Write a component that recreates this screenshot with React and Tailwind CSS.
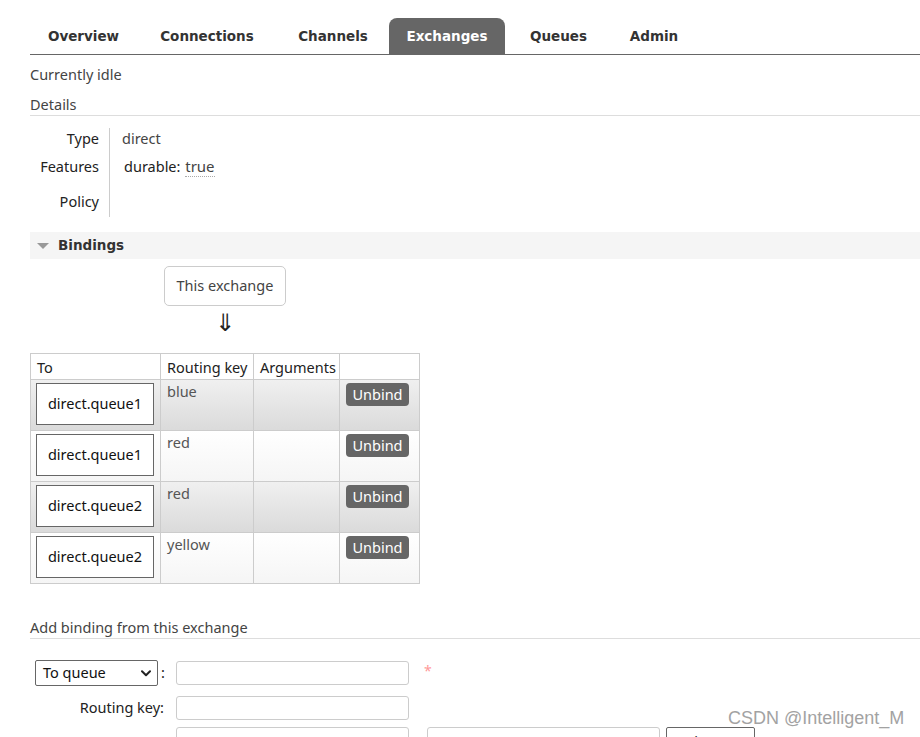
import React from "react";

const body = { fontFamily: '"Noto Sans", "Open Sans", sans-serif' };
const bold = { fontFamily: '"DejaVu Sans", Verdana, sans-serif' };

const tabs = [
  { name: "Overview", w: "w-[107px]" },
  { name: "Connections", w: "w-[140px]" },
  { name: "Channels", w: "w-[112px]" },
  { name: "Exchanges", w: "w-[116px]", active: true },
  { name: "Queues", w: "w-[107px]" },
  { name: "Admin", w: "w-[84px]" },
];

const rows = [
  { q: "direct.queue1", key: "blue", odd: true },
  { q: "direct.queue1", key: "red", odd: false },
  { q: "direct.queue2", key: "red", odd: true },
  { q: "direct.queue2", key: "yellow", odd: false },
];

function Chevron() {
  return (
    <svg width="10" height="7" viewBox="0 0 10 7" fill="none">
      <path d="M1 1.2 L5 5.2 L9 1.2" stroke="#222" strokeWidth="2" strokeLinecap="round" strokeLinejoin="round" />
    </svg>
  );
}

export default function App() {
  return (
    <div className="relative w-[920px] h-[737px] overflow-hidden bg-white text-[#444] text-[14.5px]" style={body}>
      <div className="pl-[30px] pt-[18px]">
        {/* Tabs */}
        <div className="flex border-b border-[#666]">
          {tabs.map((t) => (
            <div
              key={t.name}
              className={`${t.w} h-[36px] flex items-center justify-center font-bold text-[13.5px] ${
                t.active ? "bg-[#666] text-white rounded-t-[8px]" : "text-[#333]"
              }`}
              style={bold}
            >
              {t.name}
            </div>
          ))}
        </div>

        <div className="mt-[9px] leading-[20px]">Currently idle</div>
        <div className="mt-[10px] leading-[20px] pb-[1px] border-b border-[#ddd]">Details</div>

        {/* Details */}
        <div className="mt-[12px] grid grid-cols-[80px_auto] leading-[20px]">
          <div className="h-[28px] pr-[10px] text-right text-[#222] border-r border-[#ccc]">Type</div>
          <div className="h-[28px] pl-[12px]">direct</div>
          <div className="h-[35px] pr-[10px] text-right text-[#222] border-r border-[#ccc]">Features</div>
          <div className="h-[35px] pl-[14px] text-[#222]">
            durable:{" "}
            <span className="ml-[1px] text-[#444] border-b border-dotted border-[#aaa] text-[15px]">true</span>
          </div>
          <div className="h-[26px] pr-[10px] text-right text-[#222] border-r border-[#ccc]">Policy</div>
          <div className="h-[26px]"></div>
        </div>

        {/* Bindings header */}
        <div className="mt-[15px] h-[27px] bg-[#f5f5f5] flex items-center pl-[7px]">
          <svg width="12" height="8" viewBox="0 0 12 8">
            <path d="M0 1 L12 1 L6 7 Z" fill="#999" />
          </svg>
          <span className="ml-[9px] font-bold text-[13.5px] text-[#333]" style={bold}>
            Bindings
          </span>
        </div>

        <div className="ml-[134px] mt-[7px] w-[122px]">
          <div className="h-[40px] border border-[#ccc] rounded-[5px] flex items-center justify-center text-[#444]">
            This exchange
          </div>
          <div className="mt-[5px] text-center text-[24px] leading-[24px] text-[#222]" style={bold}>
            ⇓
          </div>
        </div>

        {/* Bindings table */}
        <table className="mt-[18px] border-collapse border border-[#ccc] text-[14.5px]">
          <thead>
            <tr className="h-[26px] text-[#222]">
              <th className="w-[130px] border border-[#ccc] text-left font-normal pl-[6px] py-0 leading-[20px]">To</th>
              <th className="w-[93px] border border-[#ccc] text-left font-normal pl-[6px] py-0 leading-[20px]">Routing key</th>
              <th className="w-[86px] border border-[#ccc] text-left font-normal pl-[6px] py-0 leading-[20px]">Arguments</th>
              <th className="w-[80px] border border-[#ccc] py-0"></th>
            </tr>
          </thead>
          <tbody>
            {rows.map((r, i) => (
              <tr
                key={i}
                className={`h-[51px] ${
                  r.odd ? "bg-linear-to-b from-[#f0f0f0] to-[#dadada]" : "bg-linear-to-b from-[#ffffff] to-[#f5f5f5]"
                }`}
              >
                <td className="border border-[#ccc] align-top pt-[3px] pl-[5px] pb-[4px]">
                  <div className="w-[118px] h-[42px] border border-[#666] bg-white flex items-center justify-center text-[#111]">
                    {r.q}
                  </div>
                </td>
                <td className="border border-[#ccc] align-top pl-[6px] pt-[1px] leading-[20px] text-[#555]">{r.key}</td>
                <td className="border border-[#ccc]"></td>
                <td className="border border-[#ccc] align-top pl-[6px] pt-[3px]">
                  <div className="w-[63px] h-[23px] rounded-[4px] bg-[#666] text-white flex items-center justify-center leading-none">
                    Unbind
                  </div>
                </td>
              </tr>
            ))}
          </tbody>
        </table>

        {/* Add binding */}
        <div className="mt-[33px] leading-[20px] pb-[1px] border-b border-[#ddd]">Add binding from this exchange</div>

        <div className="mt-[21px] flex items-center">
          <div className="w-[146px] flex items-center">
            <div className="ml-[5px] w-[123px] h-[26px] border border-[#666] rounded-[2px] flex items-center justify-between pl-[7px] pr-[6px] text-[#111]">
              <span>To queue</span>
              <Chevron />
            </div>
            <span className="ml-[3px] text-[#222]">:</span>
          </div>
          <div className="w-[233px] h-[24px] border border-[#ccc] rounded-[3px]"></div>
          <span className="ml-[15px] text-[#f99] text-[14px] -mt-[6px]">*</span>
        </div>

        <div className="mt-[10px] flex items-center">
          <div className="w-[146px] pr-[12px] text-right text-[#222]">Routing key:</div>
          <div className="w-[233px] h-[24px] border border-[#ccc] rounded-[3px]"></div>
        </div>

        <div className="mt-[7px] flex items-start">
          <div className="w-[146px]"></div>
          <div className="w-[233px] h-[24px] border border-[#ccc] rounded-[3px]"></div>
          <div className="ml-[18px] w-[233px] h-[24px] border border-[#ccc] rounded-[3px]"></div>
          <div className="ml-[6px] w-[89px] h-[26px] border border-[#666] rounded-[2px] flex items-start justify-between pl-[8px] pr-[6px] pt-[3px] text-[#111] leading-[20px]">
            <span>String</span>
            <span className="mt-[6px]">
              <Chevron />
            </span>
          </div>
        </div>
      </div>

      <div
        className="absolute left-[728px] top-[707px] text-[18px] leading-[22px] text-[#999] opacity-90"
        style={{ fontFamily: '"Liberation Sans", Arial, sans-serif' }}
      >
        CSDN @Intelligent_M
      </div>
    </div>
  );
}
